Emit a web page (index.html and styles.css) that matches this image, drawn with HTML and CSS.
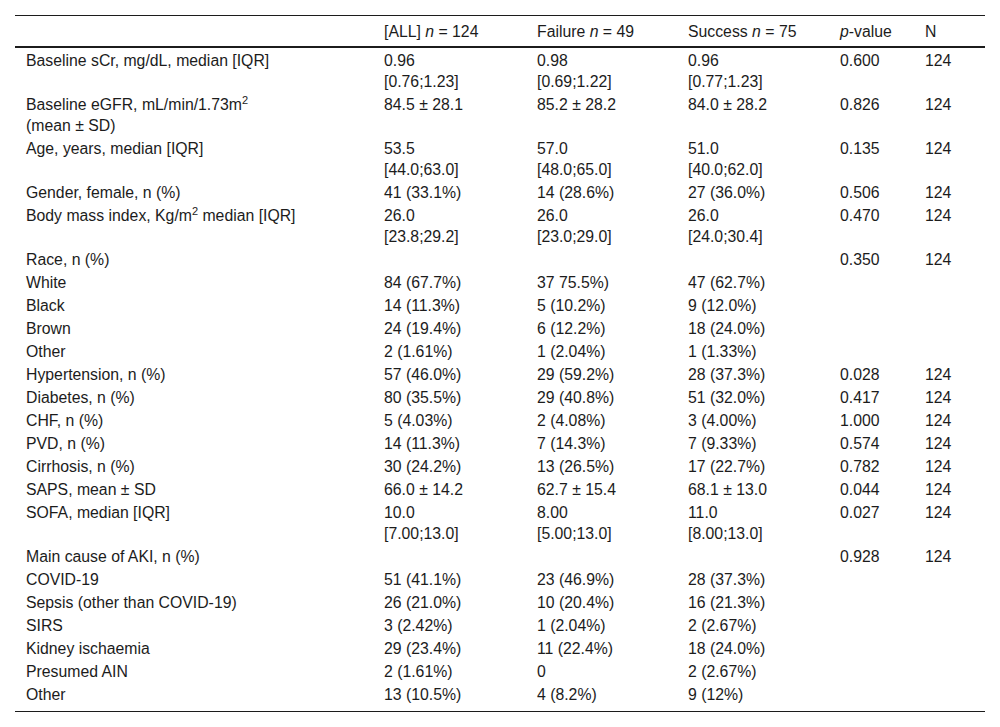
FILE: index.html
```html
<!DOCTYPE html>
<html>
<head>
<meta charset="utf-8">
<link rel="stylesheet" href="styles.css">
</head>
<body>
<div class="wrap">
<table class="tbl">
<colgroup>
<col class="c-label"><col class="c-all"><col class="c-fail"><col class="c-succ"><col class="c-p"><col class="c-n">
</colgroup>
<thead>
<tr><th></th><th>[ALL] <i>n</i> = 124</th><th>Failure <i>n</i> = 49</th><th>Success <i>n</i> = 75</th><th><i>p</i>-value</th><th>N</th></tr>
</thead>
<tbody>
<tr><td>Baseline sCr, mg/dL, median [IQR]</td><td>0.96<br>[0.76;1.23]</td><td>0.98<br>[0.69;1.22]</td><td>0.96<br>[0.77;1.23]</td><td>0.600</td><td>124</td></tr>
<tr><td>Baseline eGFR, mL/min/1.73m<sup>2</sup><br>(mean ± SD)</td><td>84.5 ± 28.1</td><td>85.2 ± 28.2</td><td>84.0 ± 28.2</td><td>0.826</td><td>124</td></tr>
<tr><td>Age, years, median [IQR]</td><td>53.5<br>[44.0;63.0]</td><td>57.0<br>[48.0;65.0]</td><td>51.0<br>[40.0;62.0]</td><td>0.135</td><td>124</td></tr>
<tr><td>Gender, female, n (%)</td><td>41 (33.1%)</td><td>14 (28.6%)</td><td>27 (36.0%)</td><td>0.506</td><td>124</td></tr>
<tr><td>Body mass index, Kg/m<sup>2</sup> median [IQR]</td><td>26.0<br>[23.8;29.2]</td><td>26.0<br>[23.0;29.0]</td><td>26.0<br>[24.0;30.4]</td><td>0.470</td><td>124</td></tr>
<tr><td>Race, n (%)</td><td></td><td></td><td></td><td>0.350</td><td>124</td></tr>
<tr><td>White</td><td>84 (67.7%)</td><td>37 75.5%)</td><td>47 (62.7%)</td><td></td><td></td></tr>
<tr><td>Black</td><td>14 (11.3%)</td><td>5 (10.2%)</td><td>9 (12.0%)</td><td></td><td></td></tr>
<tr><td>Brown</td><td>24 (19.4%)</td><td>6 (12.2%)</td><td>18 (24.0%)</td><td></td><td></td></tr>
<tr><td>Other</td><td>2 (1.61%)</td><td>1 (2.04%)</td><td>1 (1.33%)</td><td></td><td></td></tr>
<tr><td>Hypertension, n (%)</td><td>57 (46.0%)</td><td>29 (59.2%)</td><td>28 (37.3%)</td><td>0.028</td><td>124</td></tr>
<tr><td>Diabetes, n (%)</td><td>80 (35.5%)</td><td>29 (40.8%)</td><td>51 (32.0%)</td><td>0.417</td><td>124</td></tr>
<tr><td>CHF, n (%)</td><td>5 (4.03%)</td><td>2 (4.08%)</td><td>3 (4.00%)</td><td>1.000</td><td>124</td></tr>
<tr><td>PVD, n (%)</td><td>14 (11.3%)</td><td>7 (14.3%)</td><td>7 (9.33%)</td><td>0.574</td><td>124</td></tr>
<tr><td>Cirrhosis, n (%)</td><td>30 (24.2%)</td><td>13 (26.5%)</td><td>17 (22.7%)</td><td>0.782</td><td>124</td></tr>
<tr><td>SAPS, mean ± SD</td><td>66.0 ± 14.2</td><td>62.7 ± 15.4</td><td>68.1 ± 13.0</td><td>0.044</td><td>124</td></tr>
<tr><td>SOFA, median [IQR]</td><td>10.0<br>[7.00;13.0]</td><td>8.00<br>[5.00;13.0]</td><td>11.0<br>[8.00;13.0]</td><td>0.027</td><td>124</td></tr>
<tr><td>Main cause of AKI, n (%)</td><td></td><td></td><td></td><td>0.928</td><td>124</td></tr>
<tr><td>COVID-19</td><td>51 (41.1%)</td><td>23 (46.9%)</td><td>28 (37.3%)</td><td></td><td></td></tr>
<tr><td>Sepsis (other than COVID-19)</td><td>26 (21.0%)</td><td>10 (20.4%)</td><td>16 (21.3%)</td><td></td><td></td></tr>
<tr><td>SIRS</td><td>3 (2.42%)</td><td>1 (2.04%)</td><td>2 (2.67%)</td><td></td><td></td></tr>
<tr><td>Kidney ischaemia</td><td>29 (23.4%)</td><td>11 (22.4%)</td><td>18 (24.0%)</td><td></td><td></td></tr>
<tr><td>Presumed AIN</td><td>2 (1.61%)</td><td>0</td><td>2 (2.67%)</td><td></td><td></td></tr>
<tr class="last"><td>Other</td><td>13 (10.5%)</td><td>4 (8.2%)</td><td>9 (12%)</td><td></td><td></td></tr>
</tbody>
</table>
</div>
</body>
</html>
```

FILE: styles.css
```css
html, body {
  margin: 0;
  padding: 0;
  background: #fff;
}
.wrap {
  padding: 15px;
}
.tbl {
  width: 970px;
  border-collapse: collapse;
  table-layout: fixed;
  font-family: "Liberation Sans", Arial, sans-serif;
  font-size: 15.8px;
  line-height: 21px;
  color: #1c1c1c;
  border-top: 1px solid #1c1c1c;
  border-bottom: 1px solid #1c1c1c;
}
.c-label { width: 358px; }
.c-all { width: 153px; }
.c-fail { width: 151px; }
.c-succ { width: 152px; }
.c-p { width: 85px; }
.c-n { width: 71px; }
.tbl th {
  font-weight: normal;
  text-align: left;
  vertical-align: top;
  padding: 5px 4px 4px 11px;
  border-bottom: 2px solid #1c1c1c;
}
.tbl td {
  text-align: left;
  vertical-align: top;
  padding: 1px 4px 1px 11px;
}
.tbl tbody tr:first-child td {
  padding-top: 2px;
}
.tbl tr.last td {
  padding-bottom: 6px;
}
.tbl i {
  font-style: italic;
}
.tbl sup {
  font-size: 11px;
  line-height: 0;
  vertical-align: 6px;
}
```
